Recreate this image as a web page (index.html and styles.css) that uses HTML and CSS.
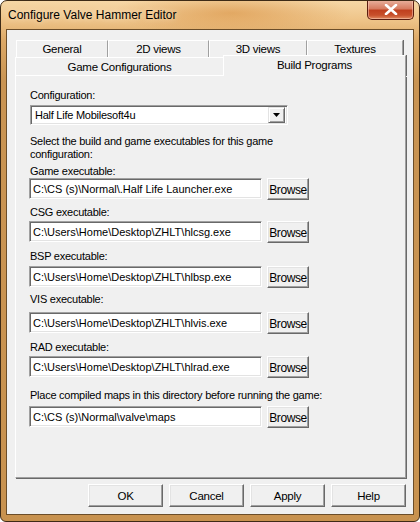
FILE: index.html
```html
<!DOCTYPE html>
<html>
<head>
<meta charset="utf-8">
<link rel="stylesheet" href="styles.css">
</head>
<body>
<div class="window">
  <div class="titlebar">
    <span class="title">Configure Valve Hammer Editor</span>
    <div class="close">
      <svg width="14" height="11" viewBox="0 0 14 11"><path d="M2 1 L12 10 M12 1 L2 10" stroke="#ffffff" stroke-width="2.6" stroke-linecap="round"/></svg>
    </div>
  </div>
  <div class="client">
    <div class="tabs">
      <div class="tabrow back">
        <div class="tab t-general">General</div>
        <div class="tab t-2d">2D views</div>
        <div class="tab t-3d">3D views</div>
        <div class="tab t-tex">Textures</div>
      </div>
      <div class="tabrow front">
        <div class="tab t-game">Game Configurations</div>
        <div class="tab t-build selected">Build Programs</div>
      </div>
    </div>
    <div class="panel">
      <div class="label l-config">Configuration:</div>
      <div class="combo">
        <span class="combo-text">Half Life Mobilesoft4u</span>
        <span class="combo-btn"><svg width="7" height="4" viewBox="0 0 7 4"><path d="M0 0 H7 L3.5 4 Z" fill="#000"/></svg></span>
      </div>
      <div class="desc">Select the build and game executables for this game configuration:</div>

      <div class="label l-game">Game executable:</div>
      <div class="row r-game"><div class="input">C:\CS (s)\Normal\.Half Life Launcher.exe</div><div class="btn browse">Browse</div></div>

      <div class="label l-csg">CSG executable:</div>
      <div class="row r-csg"><div class="input">C:\Users\Home\Desktop\ZHLT\hlcsg.exe</div><div class="btn browse">Browse</div></div>

      <div class="label l-bsp">BSP executable:</div>
      <div class="row r-bsp"><div class="input">C:\Users\Home\Desktop\ZHLT\hlbsp.exe</div><div class="btn browse">Browse</div></div>

      <div class="label l-vis">VIS executable:</div>
      <div class="row r-vis"><div class="input">C:\Users\Home\Desktop\ZHLT\hlvis.exe</div><div class="btn browse">Browse</div></div>

      <div class="label l-rad">RAD executable:</div>
      <div class="row r-rad"><div class="input">C:\Users\Home\Desktop\ZHLT\hlrad.exe</div><div class="btn browse">Browse</div></div>

      <div class="label l-place">Place compiled maps in this directory before running the game:</div>
      <div class="row r-place"><div class="input">C:\CS (s)\Normal\valve\maps</div><div class="btn browse">Browse</div></div>
    </div>
    <div class="buttons">
      <div class="btn dlg">OK</div>
      <div class="btn dlg">Cancel</div>
      <div class="btn dlg">Apply</div>
      <div class="btn dlg">Help</div>
    </div>
  </div>
</div>
</body>
</html>
```
FILE: styles.css
```css
* { box-sizing: border-box; }
html, body { margin: 0; padding: 0; background: #ffffff; }
body { font-family: "Liberation Sans", Arial, sans-serif; font-size: 11px; color: #000; letter-spacing: -0.25px; }

.window {
  width: 420px;
  height: 522px;
  border: 1px solid #3e2b16;
  border-radius: 7px 7px 6px 6px;
  background:
    radial-gradient(ellipse 120px 22px at 230px 12px, rgba(214,140,60,0.55), rgba(214,140,60,0) 100%),
    linear-gradient(to bottom, #f6d7a6 0px, #efc58a 18px, #dca866 40px, #c99453 80px, #c8924f 100%);
  display: flex;
  flex-direction: column;
  overflow: hidden;
}

.titlebar {
  height: 28px;
  position: relative;
  display: flex;
  align-items: center;
  padding-left: 7px;
}
.title {
  font-family: "Liberation Sans", Arial, sans-serif;
  font-size: 12px;
  letter-spacing: 0;
  color: #000;
  margin-top: -1px;
  text-shadow: 0 0 6px rgba(255,240,220,0.9);
}
.close {
  position: absolute;
  top: -1px;
  right: 5px;
  width: 47px;
  height: 20px;
  border: 1px solid #5a1d10;
  border-top: none;
  border-radius: 0 0 5px 5px;
  background: linear-gradient(to bottom, #eab3a0 0%, #d77d62 45%, #c0401f 55%, #c8502c 80%, #e08a60 100%);
  box-shadow: inset 0 0 0 1px rgba(255,210,190,0.5);
  display: flex;
  align-items: center;
  justify-content: center;
}

.client {
  margin: 0 5px 6px 5px;
  flex: 1;
  border: 1px solid #6b4d29;
  background: #f0f0f0;
  padding: 10px 0 6px 8px;
  display: flex;
  flex-direction: column;
}

.tabs { display: flex; flex-direction: column; width: 391px; }
.tabrow { display: flex; }
.tabrow.back { height: 17px; padding-left: 1px; }
.tabrow.front { height: 19px; }

.tab {
  background: #f0f0f0;
  display: flex;
  justify-content: center;
  border-top: 1px solid #ffffff;
  border-left: 1px solid #ffffff;
  border-right: 1px solid #a0a0a0;
  box-shadow: 1px 0 0 #696969;
  position: relative;
  font-size: 11.5px;
}
.back .tab { align-items: flex-start; padding-top: 2px; height: 17px; }
.t-general { width: 92px; }
.t-2d { width: 101px; }
.t-3d { width: 98px; }
.t-tex { width: 96px; }

.front .tab { align-items: flex-start; }
.t-game { width: 208px; padding-top: 3px; border-bottom: 1px solid #ffffff; box-shadow: none; border-right: none; }
.t-build {
  width: 183px;
  height: 21px;
  margin-top: -2px;
  padding-top: 3px;
  border-right: 1px solid #a0a0a0;
  box-shadow: 1px 0 0 #696969;
  z-index: 2;
  background: #f0f0f0;
}

.panel {
  width: 391px;
  height: 402px;
  border-left: 1px solid #ffffff;
  border-right: 1px solid #a0a0a0;
  border-bottom: 1px solid #a0a0a0;
  box-shadow: 1px 1px 0 #696969;
  padding: 13px 0 0 13px;
  display: flex;
  flex-direction: column;
  align-items: flex-start;
}

.label { line-height: 13px; height: 13px; padding-left: 1px; white-space: nowrap; }
.desc { line-height: 13px; padding-left: 1px; width: 270px; margin-top: 10px; }

.combo {
  margin-top: 3px;
  margin-left: 1px;
  width: 258px;
  height: 20px;
  background: #fff;
  border-top: 1px solid #a0a0a0;
  border-left: 1px solid #a0a0a0;
  border-right: 1px solid #ffffff;
  border-bottom: 1px solid #ffffff;
  box-shadow: inset 1px 1px 0 #696969, inset -1px -1px 0 #e3e3e3;
  display: flex;
  align-items: center;
  justify-content: space-between;
  padding: 2px;
}
.combo-text { padding-left: 2px; line-height: 14px; }
.combo-btn {
  width: 17px;
  height: 16px;
  background: #f0f0f0;
  border-top: 1px solid #e3e3e3;
  border-left: 1px solid #e3e3e3;
  border-right: 1px solid #696969;
  border-bottom: 1px solid #696969;
  box-shadow: inset 1px 1px 0 #ffffff, inset -1px -1px 0 #a0a0a0;
  display: flex;
  align-items: center;
  justify-content: center;
}

.row { display: flex; align-items: flex-start; height: 22px; }
.input {
  width: 233px;
  height: 21px;
  background: #fff;
  border-top: 1px solid #a0a0a0;
  border-left: 1px solid #a0a0a0;
  border-right: 1px solid #ffffff;
  border-bottom: 1px solid #ffffff;
  box-shadow: inset 1px 1px 0 #696969, inset -1px -1px 0 #e3e3e3;
  padding: 3px 0 0 3px;
  line-height: 14px;
  letter-spacing: 0;
  white-space: nowrap;
  overflow: hidden;
}

.btn {
  background: #f0f0f0;
  border-top: 1px solid #ffffff;
  border-left: 1px solid #ffffff;
  border-right: 1px solid #696969;
  border-bottom: 1px solid #696969;
  box-shadow: inset -1px -1px 0 #a0a0a0, inset 1px 1px 0 #e3e3e3;
  display: flex;
  align-items: center;
  justify-content: center;
  line-height: 14px;
}
.browse { width: 42px; height: 22px; margin-left: 5px; font-size: 12px; padding-top: 1px; letter-spacing: -0.4px; }

.l-game { margin-top: 4px; }
.r-game { margin-top: 0; }
.l-csg { margin-top: 6px; }
.r-csg { margin-top: 2px; }
.l-bsp { margin-top: 7px; }
.r-bsp { margin-top: 3px; }
.l-vis { margin-top: 5px; }
.r-vis { margin-top: 6px; }
.l-rad { margin-top: 7px; }
.r-rad { margin-top: 2px; }
.l-place { margin-top: 11px; }
.r-place { margin-top: 4px; }

.buttons {
  display: flex;
  justify-content: flex-end;
  gap: 6px;
  margin-top: 6px;
  padding-right: 7px;
}
.dlg { width: 75px; height: 23px; font-size: 11.5px; }
```
